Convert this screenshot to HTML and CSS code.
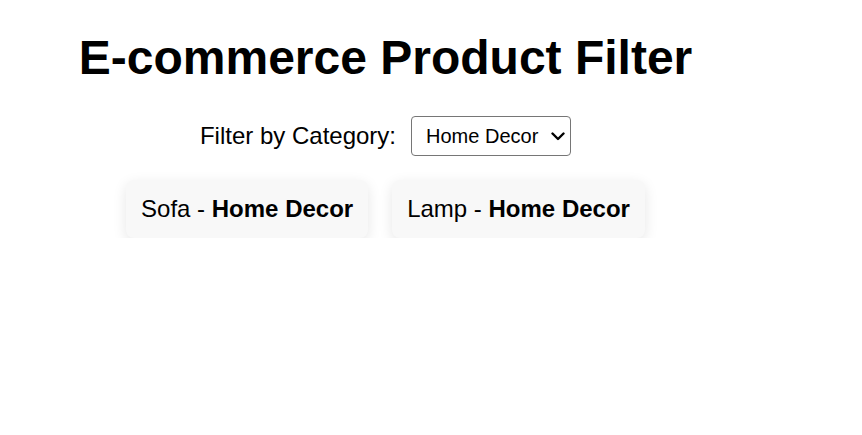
FILE: index.html
```html
<!DOCTYPE html>
<html lang="en">
<head>
<meta charset="utf-8">
<title>E-commerce Product Filter</title>
<link rel="stylesheet" href="styles.css">
</head>
<body>
<div class="app">
  <h1 class="title">E-commerce Product Filter</h1>
  <div class="filter">
    <label class="filter-label" for="cat">Filter by Category:</label>
    <span class="select-wrap">
      <select id="cat" class="filter-select">
        <option>All</option>
        <option>Electronics</option>
        <option>Clothing</option>
        <option selected>Home Decor</option>
      </select>
      <svg class="select-arrow" width="14" height="9" viewBox="0 0 14 9" aria-hidden="true">
        <path d="M1.5 1.5 L7 7 L12.5 1.5" fill="none" stroke="#000" stroke-width="2.4" stroke-linecap="round" stroke-linejoin="round"/>
      </svg>
    </span>
  </div>
  <div class="products">
    <div class="card">Sofa - <strong>Home Decor</strong></div>
    <div class="card">Lamp - <strong>Home Decor</strong></div>
  </div>
</div>
</body>
</html>
```
FILE: styles.css
```css
html, body {
  margin: 0;
  padding: 0;
  background: #ffffff;
}
body {
  font-family: "Liberation Sans", Arial, sans-serif;
  color: #000;
}
.app {
  width: 771px;
  padding-top: 30px;
  text-align: center;
}
.title {
  margin: 0 0 31px;
  font-size: 48px;
  font-weight: bold;
  line-height: normal;
}
.filter {
  display: flex;
  justify-content: center;
  align-items: center;
  gap: 15px;
  margin-bottom: 24px;
}
.filter-label {
  font-size: 24px;
  line-height: normal;
}
.select-wrap {
  position: relative;
  display: inline-flex;
}
.filter-select {
  -webkit-appearance: none;
  appearance: none;
  width: 160px;
  height: 40px;
  font-family: "Liberation Sans", Arial, sans-serif;
  font-size: 20px;
  color: #000;
  background-color: #fff;
  border: 1px solid #767676;
  border-radius: 4px;
  padding: 0 30px 0 14px;
  text-align: left;
}
.select-arrow {
  position: absolute;
  right: 6px;
  top: 50%;
  margin-top: -4px;
  pointer-events: none;
}
.products {
  display: flex;
  justify-content: center;
  gap: 24px;
}
.card {
  padding: 15px;
  font-size: 24px;
  line-height: normal;
  background: #f8f8f8;
  border-radius: 8px;
  box-shadow: 0 4px 14px rgba(0, 0, 0, 0.1);
}
```
